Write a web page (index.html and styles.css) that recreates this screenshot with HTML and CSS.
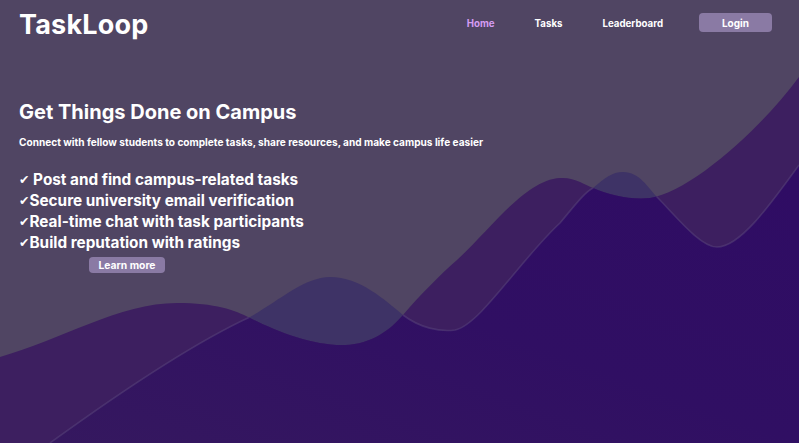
FILE: index.html
```html
<!DOCTYPE html>
<html lang="en">
<head>
<meta charset="utf-8">
<title>TaskLoop</title>
<link rel="stylesheet" href="styles.css">
</head>
<body>
<div class="page">
  <svg class="waves" viewBox="0 0 799 443" preserveAspectRatio="none" aria-hidden="true">
    <defs>
      <clipPath id="clipL1">
        <path d="M0,357 C60,340 120,303 177,303 C215,303 235,310 250,318 C280,333 315,346 345,345 C372,344 390,330 403,315 C420,295 440,275 457,260 C490,230 525,180 560,178 C575,177 585,185 593,188 C610,195 630,200 650,198 C690,192 760,130 799,77 L799,443 L0,443 Z"/>
      </clipPath>
      <linearGradient id="darkGrad" x1="0" y1="1" x2="1" y2="0">
        <stop offset="0" stop-color="#35185f"/>
        <stop offset="0.5" stop-color="#300f63"/>
        <stop offset="1" stop-color="#2f0c64"/>
      </linearGradient>
    </defs>
    <path fill="#3e3366" d="M50,443 C130,385 200,340 250,317 C280,300 305,277 330,277 C360,277 385,300 403,315 C420,328 440,332 455,330 C480,325 520,260 560,223 C575,205 585,192 593,188 C605,178 612,172 623,172 C640,172 648,188 657,197 C675,215 700,247 717,247 C740,247 770,205 799,165 L799,443 Z"/>
    <path fill="#3d1f60" d="M0,357 C60,340 120,303 177,303 C215,303 235,310 250,318 C280,333 315,346 345,345 C372,344 390,330 403,315 C420,295 440,275 457,260 C490,230 525,180 560,178 C575,177 585,185 593,188 C610,195 630,200 650,198 C690,192 760,130 799,77 L799,443 L0,443 Z"/>
    <g clip-path="url(#clipL1)">
      <path fill="url(#darkGrad)" d="M50,443 C130,385 200,340 250,317 C280,300 305,277 330,277 C360,277 385,300 403,315 C420,328 440,332 455,330 C480,325 520,260 560,223 C575,205 585,192 593,188 C605,178 612,172 623,172 C640,172 648,188 657,197 C675,215 700,247 717,247 C740,247 770,205 799,165 L799,443 Z"/>
      <path fill="none" stroke="#57447a" stroke-opacity="0.55" stroke-width="1.6" d="M50,443 C130,385 200,340 250,317 C280,300 305,277 330,277 C360,277 385,300 403,315 C420,328 440,332 455,330 C480,325 520,260 560,223 C575,205 585,192 593,188 C605,178 612,172 623,172 C640,172 648,188 657,197 C675,215 700,247 717,247 C740,247 770,205 799,165"/>
    </g>
  </svg>

  <header class="topbar">
    <div class="logo">TaskLoop</div>
    <nav class="nav">
      <a class="nav-link active" href="#">Home</a>
      <a class="nav-link" href="#">Tasks</a>
      <a class="nav-link" href="#">Leaderboard</a>
      <a class="btn btn-login" href="#">Login</a>
    </nav>
  </header>

  <main class="hero">
    <h1 class="hero-title">Get Things Done on Campus</h1>
    <p class="hero-sub">Connect with fellow students to complete tasks, share resources, and make campus life easier</p>
    <ul class="features">
      <li><span class="check">✔</span> Post and find campus-related tasks</li>
      <li><span class="check">✔</span>Secure university email verification</li>
      <li><span class="check">✔</span>Real-time chat with task participants</li>
      <li><span class="check">✔</span>Build reputation with ratings</li>
    </ul>
    <a class="btn btn-learn" href="#">Learn more</a>
  </main>
</div>
</body>
</html>
```

FILE: styles.css
```css
* { box-sizing: border-box; }

html, body {
  margin: 0;
  padding: 0;
}

body {
  background: #504563;
  color: #ffffff;
  font-family: "Inter", "Liberation Sans", sans-serif;
  overflow: hidden;
}

.page {
  position: relative;
  width: 799px;
  height: 443px;
  overflow: hidden;
}

.waves {
  position: absolute;
  left: 0;
  top: 0;
  width: 799px;
  height: 443px;
  z-index: 0;
  filter: blur(0.6px);
}

.topbar {
  position: relative;
  z-index: 1;
  display: flex;
  align-items: center;
  justify-content: space-between;
  height: 46px;
  padding: 0 27px 0 19px;
}

.logo {
  font-family: "Inter", "Liberation Sans", sans-serif;
  font-weight: 700;
  font-size: 27px;
  letter-spacing: 0.2px;
  color: #ffffff;
  line-height: 1;
  margin-top: 2px;
}

.nav {
  display: flex;
  align-items: center;
  gap: 40px;
}

.nav-link {
  color: #ffffff;
  text-decoration: none;
  font-size: 9.7px;
  font-weight: 700;
}

.nav-link.active {
  color: #d49cf2;
}

.btn {
  display: inline-flex;
  align-items: center;
  justify-content: center;
  background: #8a7aa4;
  color: #ffffff;
  text-decoration: none;
  font-weight: 700;
  border-radius: 4px;
}

.btn-login {
  width: 73px;
  height: 19px;
  font-size: 10px;
  margin-left: -4px;
  margin-top: -1px;
}

.hero {
  position: relative;
  z-index: 1;
  padding: 54px 19px 0 19px;
}

.hero-title {
  margin: 0;
  font-size: 20px;
  line-height: 24px;
  font-weight: 700;
}

.hero-sub {
  margin: 11px 0 0 0;
  font-size: 10.1px;
  line-height: 14px;
  font-weight: 700;
}

.features {
  list-style: none;
  margin: 20px 0 0 0;
  padding: 0;
}

.features li {
  font-size: 15.3px;
  line-height: 21px;
  height: 21px;
  font-weight: 700;
}

.check {
  display: inline-block;
  font-size: 12.5px;
  line-height: 1;
  font-family: "DejaVu Sans", sans-serif;
  vertical-align: 1px;
}

.btn-learn {
  margin: 4px 0 0 70px;
  width: 76px;
  height: 16px;
  font-size: 10.3px;
}
```
